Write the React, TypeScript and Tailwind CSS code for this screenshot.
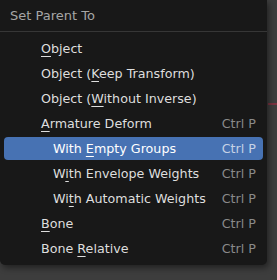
import React from "react";

type Item = {
  pre: string;
  key: string;
  post: string;
  indent?: boolean;
  shortcut?: string;
  active?: boolean;
};

const items: Item[] = [
  { pre: "", key: "O", post: "bject" },
  { pre: "Object (", key: "K", post: "eep Transform)" },
  { pre: "Object (", key: "W", post: "ithout Inverse)" },
  { pre: "", key: "A", post: "rmature Deform", shortcut: "Ctrl P" },
  { pre: "With ", key: "E", post: "mpty Groups", indent: true, shortcut: "Ctrl P", active: true },
  { pre: "W", key: "i", post: "th Envelope Weights", indent: true, shortcut: "Ctrl P" },
  { pre: "Wi", key: "t", post: "h Automatic Weights", indent: true, shortcut: "Ctrl P" },
  { pre: "", key: "B", post: "one", shortcut: "Ctrl P" },
  { pre: "Bone ", key: "R", post: "elative", shortcut: "Ctrl P" },
];

export default function App() {
  return (
    <div className="relative w-[277px] h-[280px] bg-[#3d3d3d] overflow-hidden font-['DejaVu_Sans',sans-serif]">
      <div className="absolute left-[268px] top-[103px] w-[9px] h-[2px] bg-[#7a3240]" />
      <div className="relative w-[267px] h-[265px] bg-[#181818] rounded-br-[5px] rounded-bl-[5px] shadow-[2px_3px_6px_rgba(0,0,0,0.45)] flex flex-col text-[12.7px]">
        <div className="h-[31px] flex items-center pl-[10px] text-[13px] text-[#a6a6a6]">Set Parent To</div>
        <div className="h-px bg-[#363636]" />
        <div className="pt-[4px] flex flex-col">
          {items.map((it, i) => (
            <div key={i} className="h-[25px] px-[4px] py-[1px]">
              <div
                className={
                  "h-[23px] rounded-[4px] flex items-center pr-[7px] " +
                  (it.active ? "bg-[#4772b3] text-white" : "text-[#dedede]")
                }
              >
                <div className={it.indent ? "pl-[49px] flex-1" : "pl-[37px] flex-1"}>
                  {it.pre}
                  <span className="underline decoration-1 underline-offset-[3px]">{it.key}</span>
                  {it.post}
                </div>
                {it.shortcut && (
                  <div className={it.active ? "text-[#c6d2e6]" : "text-[#8a8a8a]"}>{it.shortcut}</div>
                )}
              </div>
            </div>
          ))}
        </div>
      </div>
    </div>
  );
}
